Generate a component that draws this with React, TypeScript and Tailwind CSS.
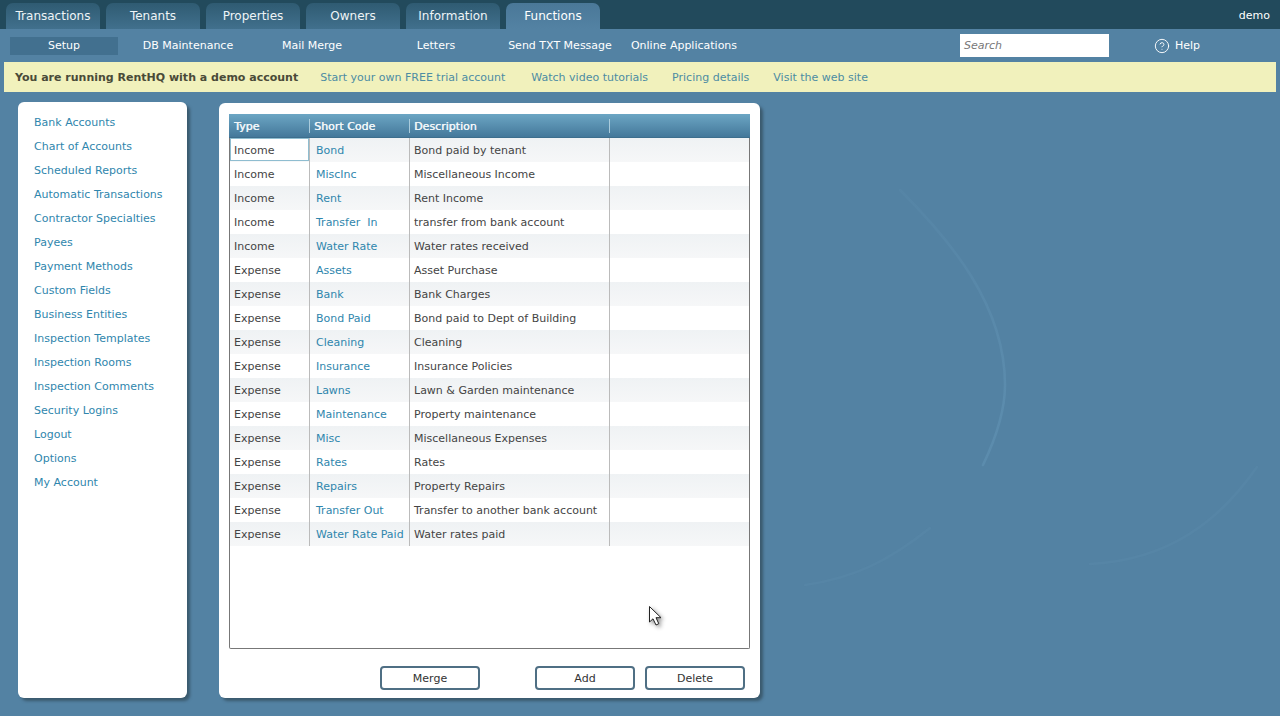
import { CircleHelp } from 'lucide-react'

const tabs = ['Transactions', 'Tenants', 'Properties', 'Owners', 'Information', 'Functions']
const subNav = ['Setup', 'DB Maintenance', 'Mail Merge', 'Letters', 'Send TXT Message', 'Online Applications']
const sideLinks = [
  'Bank Accounts',
  'Chart of Accounts',
  'Scheduled Reports',
  'Automatic Transactions',
  'Contractor Specialties',
  'Payees',
  'Payment Methods',
  'Custom Fields',
  'Business Entities',
  'Inspection Templates',
  'Inspection Rooms',
  'Inspection Comments',
  'Security Logins',
  'Logout',
  'Options',
  'My Account',
]
const rows = [
  ['Income', 'Bond', 'Bond paid by tenant'],
  ['Income', 'MiscInc', 'Miscellaneous Income'],
  ['Income', 'Rent', 'Rent Income'],
  ['Income', 'Transfer  In', 'transfer from bank account'],
  ['Income', 'Water Rate', 'Water rates received'],
  ['Expense', 'Assets', 'Asset Purchase'],
  ['Expense', 'Bank', 'Bank Charges'],
  ['Expense', 'Bond Paid', 'Bond paid to Dept of Building'],
  ['Expense', 'Cleaning', 'Cleaning'],
  ['Expense', 'Insurance', 'Insurance Policies'],
  ['Expense', 'Lawns', 'Lawn & Garden maintenance'],
  ['Expense', 'Maintenance', 'Property maintenance'],
  ['Expense', 'Misc', 'Miscellaneous Expenses'],
  ['Expense', 'Rates', 'Rates'],
  ['Expense', 'Repairs', 'Property Repairs'],
  ['Expense', 'Transfer Out', 'Transfer to another bank account'],
  ['Expense', 'Water Rate Paid', 'Water rates paid'],
]

function ActionButton({ label, className }: { label: string; className?: string }) {
  return (
    <button className={`w-[100px] h-[24px] pt-[2px] bg-white border-2 border-[#4f6f84] rounded-[4px] text-[11px] text-[#333] ${className ?? ''}`}>
      {label}
    </button>
  )
}

export default function App() {
  return (
    <div className="w-[1280px] h-[720px] overflow-hidden bg-white font-['DejaVu_Sans',sans-serif] text-[11px]">
      <div className="relative h-[716px] overflow-hidden bg-[#5382a3]">
        {/* faint arcs in the page background */}
        <svg className="absolute left-[760px] top-[100px]" width="520" height="540" fill="none" stroke="#5f90b1" strokeWidth="2.5" strokeLinecap="round">
          <defs>
            <linearGradient id="arcFade" x1="0" y1="90" x2="0" y2="300" gradientUnits="userSpaceOnUse">
              <stop offset="0" stopColor="#5f90b1" stopOpacity="0.2" />
              <stop offset="1" stopColor="#5f90b1" stopOpacity="0.7" />
            </linearGradient>
          </defs>
          <path d="M140 90 C190 140 245 205 245 285 C245 310 235 340 223 365" stroke="url(#arcFade)" />
          <path d="M170 428 C130 460 95 478 45 485" opacity="0.25" />
          <path d="M497 367 C460 420 410 460 330 464" opacity="0.25" />
        </svg>

        <div className="relative h-[29px] bg-[#224a5c] flex items-end pl-[6px] gap-[6px]">
          {tabs.map((tab, i) => (
            <div
              key={tab}
              className={`w-[94px] h-[26px] rounded-t-[7px] flex items-center justify-center text-[12px] ${
                i === 5 ? 'text-white bg-gradient-to-b from-[#4a7898] to-[#5382a3]' : 'text-[#eef4f7] bg-gradient-to-b from-[#2f5b72] to-[#41708d]'
              }`}
            >
              {tab}
            </div>
          ))}
          <span className="absolute right-[10px] top-[8px] text-[11px] text-white">demo</span>
        </div>

        <div className="relative h-[33px] flex items-center pl-[2px] text-[11px] text-white">
          {subNav.map((item, i) => (
            <div key={item} className="w-[124px] flex justify-center">
              <div className={`w-[108px] h-[18px] flex items-center justify-center pt-px whitespace-nowrap ${i === 0 ? 'bg-[#42708f]' : ''}`}>{item}</div>
            </div>
          ))}
          <div className="ml-[214px] w-[149px] h-[23px] pt-[2px] bg-white text-[11px] italic text-[#777] flex items-center pl-[4px]">Search</div>
          <div className="ml-[45px] flex items-center gap-[5px] pt-px">
            <CircleHelp size={16} strokeWidth={1.4} />
            Help
          </div>
        </div>

        <div className="relative mx-[4px] h-[30px] pt-[2px] bg-[#f1f1bc] flex items-center pl-[11px] text-[11px]">
          <b className="text-[#4a4a38]">You are running RentHQ with a demo account</b>
          <div className="ml-[22px] flex gap-[24px] text-[#4d8ca3]">
            <span className="mr-[2px]">Start your own FREE trial account</span>
            <span>Watch video tutorials</span>
            <span>Pricing details</span>
            <span>Visit the web site</span>
          </div>
        </div>

        <div className="relative flex items-start pl-[18px] pt-[10px] gap-[32px]">
          <aside className="w-[169px] h-[596px] bg-white rounded-[6px] shadow-[3px_3px_3px_#3b5a6e] pl-[16px] pt-[9px] flex flex-col">
            {sideLinks.map((link) => (
              <div key={link} className="h-[24px] flex items-center text-[#2f86ad]">
                {link}
              </div>
            ))}
          </aside>

          <main className="w-[541px] h-[595px] mt-[1px] bg-white rounded-[6px] shadow-[3px_3px_3px_#3b5a6e] pt-[11px] px-[10px] flex flex-col">
            <div className="w-[521px] h-[535px] border border-[#777] border-t-0 rounded-b-[2px]">
              <div className="h-[24px] -ml-px -mr-px pt-[1px] bg-gradient-to-b from-[#6ca6c4] to-[#44789a] border-b border-[#3d6e8d] flex items-center text-[#f0f6f9] [text-shadow:0.4px_0_0_#f0f6f9]">
                <div className="w-[81px] pl-[5px] pt-[2px] border-r border-[#a9cbdc] h-[14px] flex items-center">Type</div>
                <div className="w-[100px] pl-[4px] pt-[2px] border-r border-[#a9cbdc] h-[14px] flex items-center">Short Code</div>
                <div className="w-[200px] pl-[4px] pt-[2px] border-r border-[#a9cbdc] h-[14px] flex items-center">Description</div>
              </div>
              {rows.map((row, i) => (
                <div key={row[1]} className={`h-[24px] flex text-[#444] ${i % 2 === 0 ? 'bg-gradient-to-b from-[#eff2f4] to-[#f6f7f8]' : 'bg-white'}`}>
                  {i === 0 ? (
                    <div className="w-[80px] flex items-start border-r border-[#bbb]">
                      <div className="w-[79px] h-[23px] pl-[3px] pt-[3px] flex items-center border border-[#8fbdd0] bg-white">{row[0]}</div>
                    </div>
                  ) : (
                    <div className="w-[80px] pl-[4px] flex items-center pt-[2px] border-r border-[#bbb]">{row[0]}</div>
                  )}
                  <div className="w-[100px] pl-[6px] flex items-center pt-[2px] border-r border-[#bbb] text-[#2f86ad] whitespace-pre">{row[1]}</div>
                  <div className="w-[200px] pl-[4px] flex items-center pt-[2px] border-r border-[#bbb] whitespace-nowrap">{row[2]}</div>
                </div>
              ))}
            </div>
            <div className="flex mt-[17px] pl-[151px]">
              <ActionButton label="Merge" />
              <ActionButton label="Add" className="ml-[55px]" />
              <ActionButton label="Delete" className="ml-[10px]" />
            </div>
          </main>
        </div>

        {/* mouse pointer caught in the screenshot */}
        <svg className="absolute left-[648px] top-[605px] drop-shadow-[2px_2px_2px_rgba(0,0,0,0.45)]" width="16" height="22" viewBox="0 0 16 22">
          <path d="M1.5 1.5 V17 L5 13.8 L8 20 L10.8 18.7 L8 12.7 H13 Z" fill="white" stroke="#222" strokeWidth="1" strokeLinejoin="round" />
        </svg>
      </div>
    </div>
  )
}
